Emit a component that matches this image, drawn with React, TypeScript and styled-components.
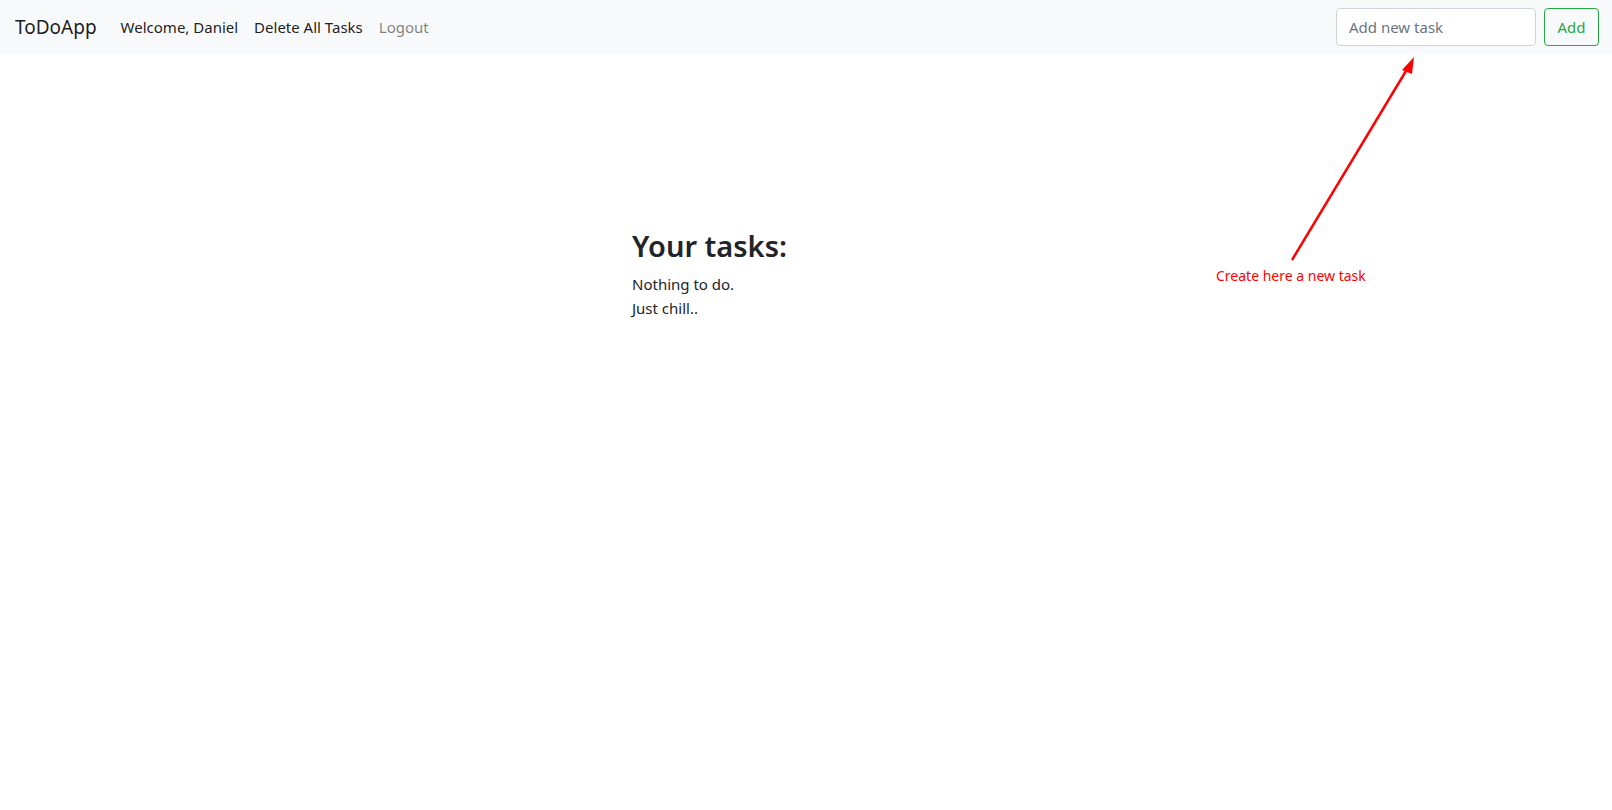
import React from "react";
import styled, { createGlobalStyle } from "styled-components";

const Global = createGlobalStyle`
  html, body { margin: 0; padding: 0; background: #fff; }
  body {
    font-family: "Noto Sans", "Open Sans", sans-serif;
    font-size: 15px;
    line-height: 24px;
    color: #212529;
  }
  * { box-sizing: border-box; }
`;

const Page = styled.div`
  position: relative;
  min-height: 810px;
`;

const Navbar = styled.nav`
  display: flex;
  align-items: center;
  height: 54px;
  padding: 8px 13px 8px 15px;
  background: #f8f9fa;
`;

const Brand = styled.a`
  font-size: 19px;
  line-height: 30px;
  color: rgba(0, 0, 0, 0.9);
  text-decoration: none;
  margin-right: 16px;
`;

const NavList = styled.ul`
  display: flex;
  list-style: none;
  margin: 0;
  padding: 0;
  flex: 1;
`;

const NavLink = styled.a<{ $muted?: boolean }>`
  display: block;
  padding: 8px;
  color: ${(p) => (p.$muted ? "rgba(0, 0, 0, 0.5)" : "rgba(0, 0, 0, 0.9)")};
  text-decoration: none;
`;

const Form = styled.form`
  display: flex;
  align-items: center;
`;

const Input = styled.input`
  width: 200px;
  height: 38px;
  padding: 6px 12px;
  font: inherit;
  color: #495057;
  background: #fff;
  border: 1px solid #ced4da;
  border-radius: 4px;
  margin-right: 8px;
  &::placeholder { color: #6c757d; }
`;

const OutlineButton = styled.button`
  width: 55px;
  height: 38px;
  padding: 6px 12px;
  font: inherit;
  color: #28a745;
  background: transparent;
  border: 1px solid #28a745;
  border-radius: 4px;
`;

const Main = styled.main`
  display: flex;
  justify-content: center;
  padding-top: 174px;
`;

const Column = styled.section`
  width: 380px;
  padding: 0 14px 0 16px;
`;

const Heading = styled.h2`
  margin: 0 0 8px;
  font-size: 29px;
  font-weight: 600;
  line-height: 36px;
`;

const Text = styled.p`
  margin: 0;
`;

const Annotation = styled.div`
  position: absolute;
  left: 1216px;
  top: 265px;
  font-size: 14px;
  line-height: 21px;
  color: #ff0000;
  white-space: nowrap;
`;

const ArrowSvg = styled.svg`
  position: absolute;
  left: 1280px;
  top: 50px;
`;

export default function App() {
  return (
    <Page>
      <Global />
      <Navbar>
        <Brand href="#">ToDoApp</Brand>
        <NavList>
          <li><NavLink href="#">Welcome, Daniel</NavLink></li>
          <li><NavLink href="#">Delete All Tasks</NavLink></li>
          <li><NavLink href="#" $muted>Logout</NavLink></li>
        </NavList>
        <Form onSubmit={(e) => e.preventDefault()}>
          <Input placeholder="Add new task" />
          <OutlineButton type="submit">Add</OutlineButton>
        </Form>
      </Navbar>
      <Main>
        <Column>
          <Heading>Your tasks:</Heading>
          <Text>Nothing to do.</Text>
          <Text>Just chill..</Text>
        </Column>
      </Main>
      <ArrowSvg width="150" height="220" viewBox="1280 50 150 220">
        <line x1="1292" y1="260" x2="1409" y2="66" stroke="#ff0000" strokeWidth="2.5" />
        <polygon points="1414,57 1402,70 1412,74" fill="#ff0000" />
      </ArrowSvg>
      <Annotation>Create here a new task</Annotation>
    </Page>
  );
}
